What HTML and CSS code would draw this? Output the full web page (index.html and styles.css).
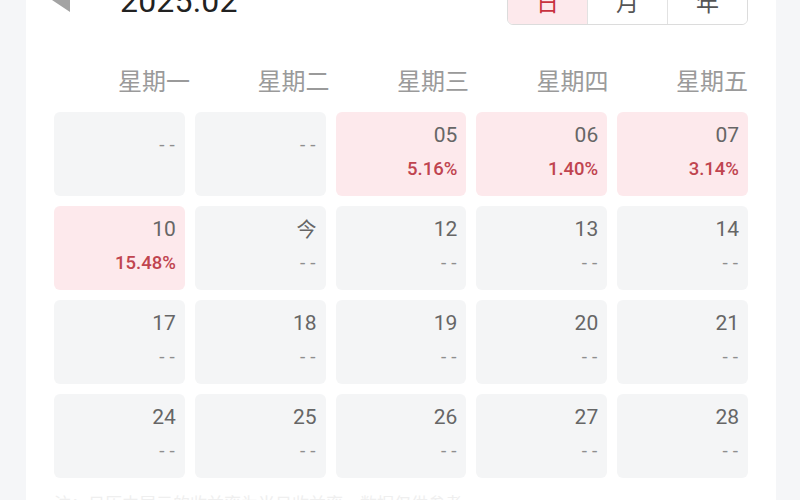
FILE: index.html
```html
<!DOCTYPE html>
<html lang="zh-CN">
<head>
<meta charset="utf-8">
<link rel="stylesheet" href="styles.css">
</head>
<body>
<div class="page">
  <div class="strip strip-left"></div>
  <main class="card">
    <div class="title-row">
      <svg class="prev" width="18" height="24" viewBox="0 0 18 24"><polygon points="0,12 18,0 18,24" fill="#a3a3a3"/></svg>
      <div class="month">2025.02</div>
      <div class="seg">
        <span class="seg-item active">日</span>
        <span class="seg-item">月</span>
        <span class="seg-item">年</span>
      </div>
    </div>
    <div class="week">
      <span>星期一</span><span>星期二</span><span>星期三</span><span>星期四</span><span>星期五</span>
    </div>
    <div class="grid">
      <div class="cell empty"><div class="val dash">--</div></div>
      <div class="cell empty"><div class="val dash">--</div></div>
      <div class="cell up"><div class="day">05</div><div class="val pct">5.16%</div></div>
      <div class="cell up"><div class="day">06</div><div class="val pct">1.40%</div></div>
      <div class="cell up"><div class="day">07</div><div class="val pct">3.14%</div></div>

      <div class="cell up"><div class="day">10</div><div class="val pct">15.48%</div></div>
      <div class="cell"><div class="day today">今</div><div class="val dash">--</div></div>
      <div class="cell"><div class="day">12</div><div class="val dash">--</div></div>
      <div class="cell"><div class="day">13</div><div class="val dash">--</div></div>
      <div class="cell"><div class="day">14</div><div class="val dash">--</div></div>

      <div class="cell"><div class="day">17</div><div class="val dash">--</div></div>
      <div class="cell"><div class="day">18</div><div class="val dash">--</div></div>
      <div class="cell"><div class="day">19</div><div class="val dash">--</div></div>
      <div class="cell"><div class="day">20</div><div class="val dash">--</div></div>
      <div class="cell"><div class="day">21</div><div class="val dash">--</div></div>

      <div class="cell"><div class="day">24</div><div class="val dash">--</div></div>
      <div class="cell"><div class="day">25</div><div class="val dash">--</div></div>
      <div class="cell"><div class="day">26</div><div class="val dash">--</div></div>
      <div class="cell"><div class="day">27</div><div class="val dash">--</div></div>
      <div class="cell"><div class="day">28</div><div class="val dash">--</div></div>
    </div>
    <p class="note">注：日历中展示的收益率为当日收益率，数据仅供参考</p>
  </main>
  <div class="strip strip-right"></div>
</div>
</body>
</html>
```

FILE: styles.css
```css
* { box-sizing: border-box; }
html, body {
  margin: 0;
  padding: 0;
  width: 800px;
  height: 500px;
  overflow: hidden;
  background: #f5f6f8;
  font-family: Roboto, "Noto Sans CJK SC", sans-serif;
}
.page {
  display: flex;
  width: 800px;
  height: 500px;
}
.strip { background: #f5f6f8; }
.strip-left { width: 26px; flex: none; }
.strip-right { width: 24px; flex: none; }
.card {
  width: 750px;
  flex: none;
  background: #fff;
  padding: 0 28px;
  overflow: hidden;
}
.title-row {
  display: flex;
  align-items: center;
  height: 44px;
  margin-top: -19px;
}
.prev {
  flex: none;
  margin-left: -2px;
  margin-top: -6px;
}
.month {
  margin-left: 50px;
  font-size: 32px;
  line-height: 1;
  color: #222;
  margin-top: -4px;
  letter-spacing: 0.2px;
}
.seg {
  margin-left: auto;
  display: flex;
  width: 241px;
  height: 44px;
  border: 1px solid #dcdcdc;
  border-radius: 6px;
  overflow: hidden;
}
.seg-item {
  flex: 1;
  display: flex;
  align-items: center;
  justify-content: center;
  font-family: "Noto Sans CJK SC", sans-serif;
  font-size: 23px;
  color: #555;
  background: #fff;
  border-left: 1px solid #e2e2e2;
  padding-bottom: 4px;
}
.seg-item:first-child { border-left: none; }
.seg-item.active {
  background: #fde9ec;
  color: #c8323f;
}
.week {
  display: grid;
  grid-template-columns: repeat(5, 139.5px);
  margin-top: 39px;
  margin-left: -3.5px;
  height: 32px;
}
.week span {
  text-align: right;
  font-family: "Noto Sans CJK SC", sans-serif;
  font-size: 24px;
  line-height: 32px;
  color: #9a9a9a;
}
.grid {
  display: grid;
  grid-template-columns: repeat(5, 1fr);
  grid-auto-rows: 84px;
  gap: 10px;
  margin-top: 16px;
}
.cell {
  background: #f4f5f6;
  border-radius: 6px;
  padding: 10px 9px 0 0;
  text-align: right;
}
.cell.up { background: #fde9ec; }
.day {
  font-size: 21px;
  line-height: 26px;
  color: #666;
  height: 26px;
}
.day.today {
  font-family: "Noto Sans CJK SC", sans-serif;
  font-size: 20px;
}
.val {
  margin-top: 9px;
  line-height: 24px;
}
.pct {
  font-size: 18.5px;
  font-weight: 500;
  color: #c0444f;
}
.dash {
  font-size: 19px;
  color: #8e8e8e;
  letter-spacing: 5px;
  margin-right: -4px;
}
.cell.empty .val { margin-top: 11px; }
.note {
  margin: 13px 0 0;
  font-size: 17px;
  line-height: 24px;
  color: #efefef;
  font-family: "Noto Sans CJK SC", sans-serif;
}
```
